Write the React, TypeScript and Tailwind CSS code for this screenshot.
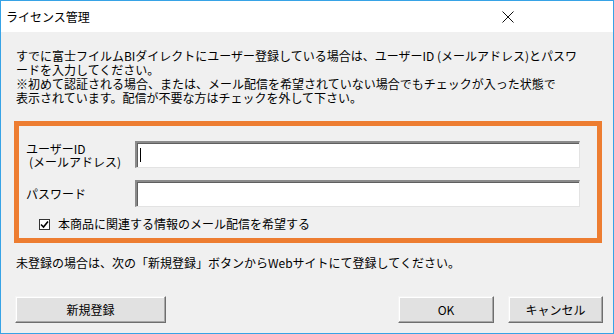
import React from "react";

const font = { fontFamily: '"Noto Sans CJK JP", "Noto Sans", sans-serif' };

function Btn({ children, className }: { children: React.ReactNode; className: string }) {
  return (
    <div
      className={
        "h-[27px] flex items-center justify-center bg-[#e1e1e1] border border-t-[#f4f4f4] border-l-[#f4f4f4] border-r-[#6e6e6e] border-b-[#6e6e6e] shadow-[inset_-1px_-1px_0_#a8a8a8,inset_1px_1px_0_#ffffff] text-[12px] text-black " +
        className
      }
    >
      {children}
    </div>
  );
}

function Field({ caret }: { caret?: boolean }) {
  return (
    <div className="w-[445px] h-[27px] bg-white border-t-2 border-l-2 border-t-[#8a8a8a] border-l-[#8a8a8a] border-r border-b border-r-[#e3e3e3] border-b-[#e3e3e3] shadow-[inset_1px_1px_0_#5f5f5f] flex items-center">
      {caret ? <div className="ml-[3px] w-px h-[14px] bg-black" /> : null}
    </div>
  );
}

export default function App() {
  return (
    <div className="w-[614px] h-[334px] bg-[#f0f0f0]" style={font}>
      <div className="w-[614px] h-[334px] border border-[#37a3e6] flex flex-col">
        <div className="h-[31px] bg-white flex items-center justify-between pl-[5px] pr-[99px]">
          <span className="text-[12px] leading-none text-black">ライセンス管理</span>
          <svg width="12" height="12" viewBox="0 0 12 12" className="mt-[1px]">
            <path d="M0.5 0.5 L11.5 11.5 M11.5 0.5 L0.5 11.5" stroke="#111" strokeWidth="1" fill="none" />
          </svg>
        </div>
        <div className="flex-1 bg-[#f0f0f0] flex flex-col text-[12px] text-black">
          <div className="pl-[15px] pt-[17px] leading-[14px] whitespace-nowrap">
            <div>すでに富士フイルムBIダイレクトにユーザー登録している場合は、ユーザーID (メールアドレス)とパスワ</div>
            <div>ードを入力してください。</div>
            <div>※初めて認証される場合、または、メール配信を希望されていない場合でもチェックが入った状態で</div>
            <div>表示されています。配信が不要な方はチェックを外して下さい。</div>
          </div>
          <div className="ml-[13px] mt-[16px] w-[588px] h-[122px] border-[5px] border-[#ed7d31] pt-[15px] pl-[7px] flex flex-col">
            <div className="flex items-center h-[27px]">
              <div className="w-[109px] leading-[13px]">
                <div>ユーザーID</div>
                <div className="pl-[3px]">(メールアドレス)</div>
              </div>
              <Field caret />
            </div>
            <div className="flex items-center h-[27px] mt-[12px]">
              <div className="w-[109px]">パスワード</div>
              <Field />
            </div>
            <div className="flex items-center mt-[10px] h-[14px] pl-[13px]">
              <div className="w-[11px] h-[11px] bg-white border border-[#333] flex items-center justify-center">
                <svg width="9" height="9" viewBox="0 0 9 9">
                  <path d="M1 4.5 L3.5 7 L8 1.5" stroke="#000" strokeWidth="1.6" fill="none" />
                </svg>
              </div>
              <span className="ml-[8px] leading-[14px]">本商品に関連する情報のメール配信を希望する</span>
            </div>
          </div>
          <div className="pl-[15px] mt-[13px] leading-[14px] whitespace-nowrap">
            未登録の場合は、次の「新規登録」ボタンからWebサイトにて登録してください。
          </div>
          <div className="flex mt-[26px] pl-[14px]">
            <Btn className="w-[151px]">新規登録</Btn>
            <Btn className="w-[96px] ml-[232px]">OK</Btn>
            <Btn className="w-[95px] ml-[14px]">キャンセル</Btn>
          </div>
        </div>
      </div>
    </div>
  );
}
